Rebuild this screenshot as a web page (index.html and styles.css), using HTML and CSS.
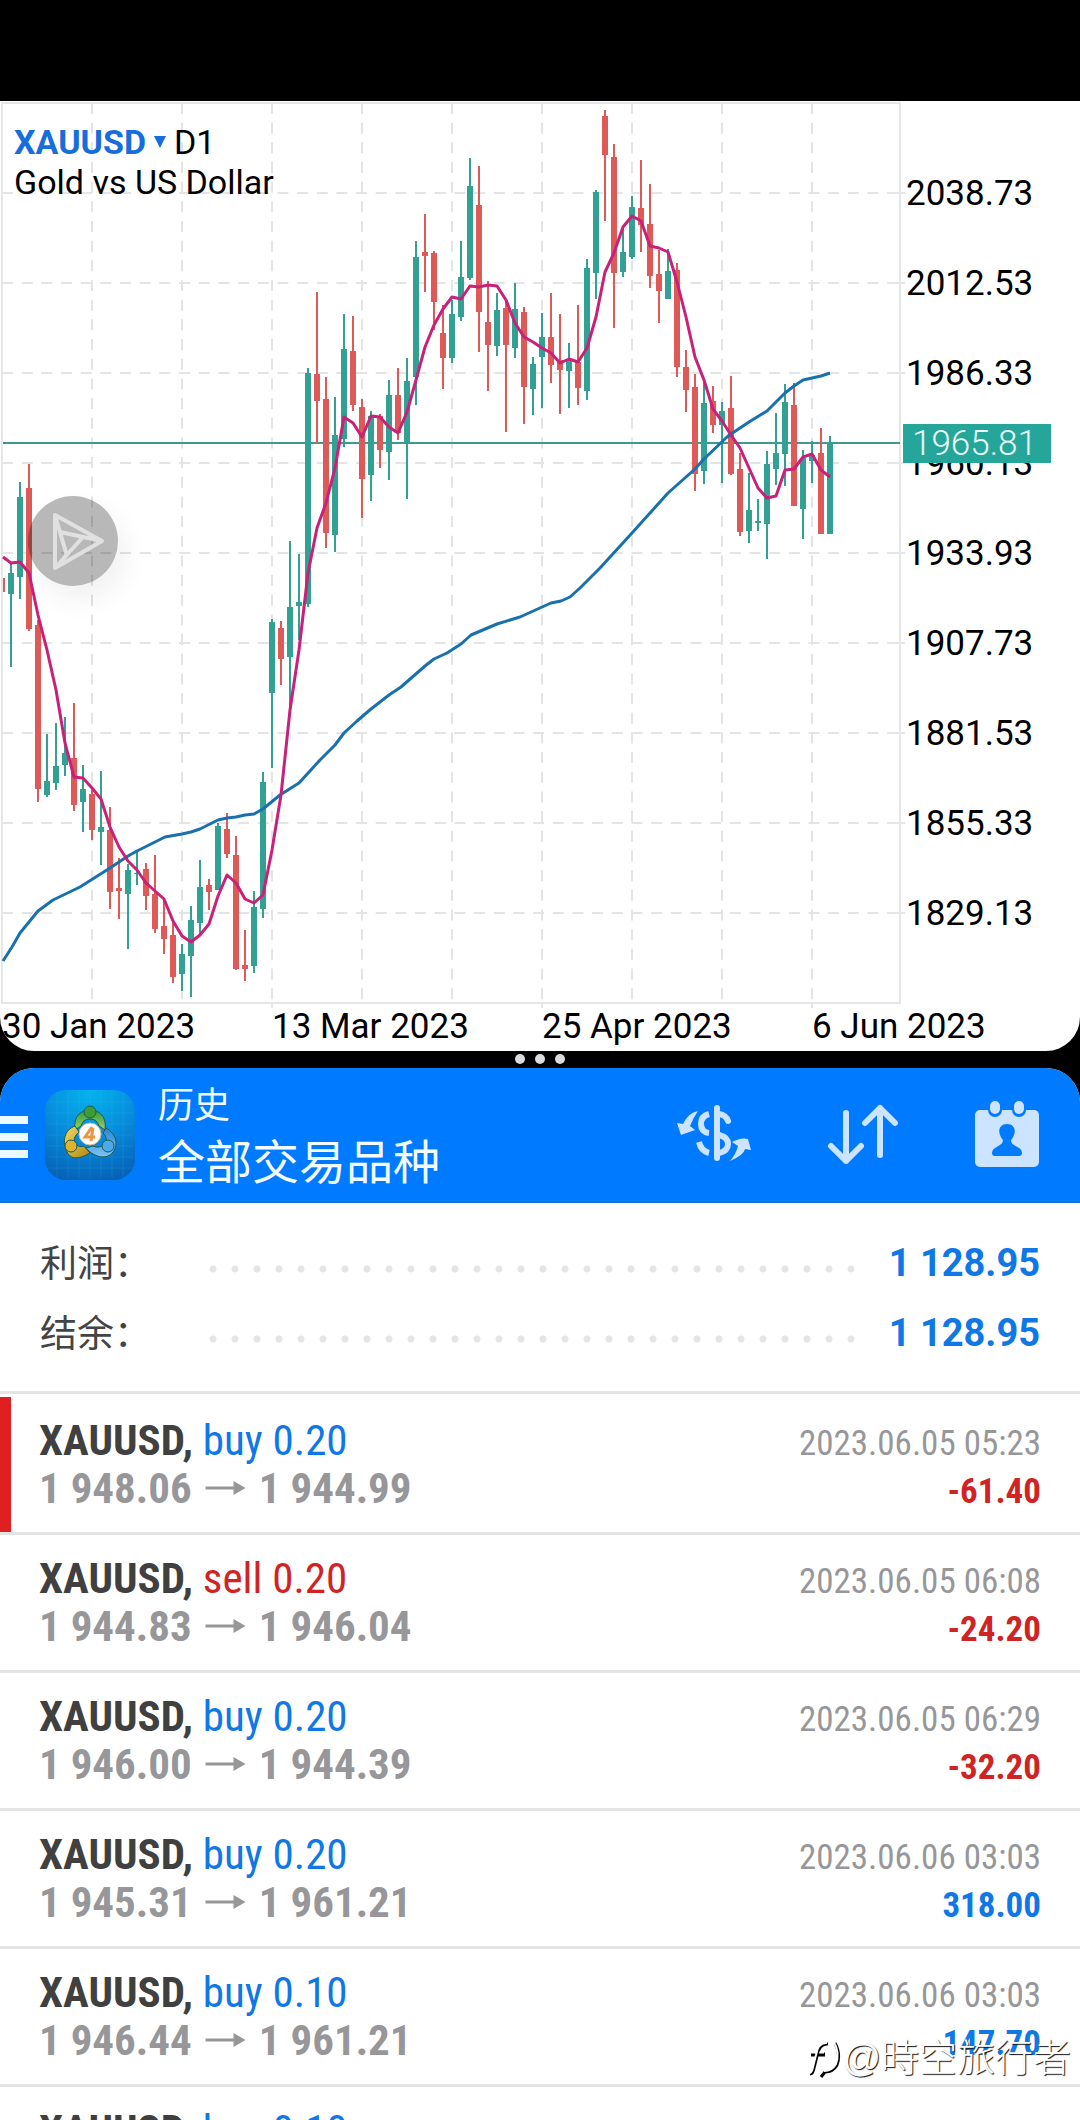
FILE: index.html
```html
<!DOCTYPE html>
<html lang="zh-CN">
<head>
<meta charset="utf-8">
<meta name="viewport" content="width=device-width, initial-scale=1">
<title>MetaTrader 4</title>
<link rel="stylesheet" href="styles.css">
</head>
<body>
<div class="screen">
  <div class="status-bar"></div>

  <section class="chart-pane" aria-label="XAUUSD D1">
    <svg class="chart" viewBox="0 101 1080 950" role="img" aria-label="Gold vs US Dollar">
      <g class="grid">
        <path d="M92 103V1003M182 103V1003M272 103V1003M362 103V1003M452 103V1003M542 103V1003M632 103V1003M722 103V1003M812 103V1003"/>
        <path d="M2 193H900M2 283H900M2 373H900M2 463H900M2 553H900M2 643H900M2 733H900M2 823H900M2 913H900"/>
      </g>
      <path class="frame" d="M2 103H900V1003H2ZM272 1003V1008M542 1003V1008M812 1003V1008M888 193H905M888 283H905M888 373H905M888 463H905M888 553H905M888 643H905M888 733H905M888 823H905M888 913H905"/>
      <path class="price-line" d="M3 443H900"/>
      <!-- rising days: wicks, then bodies -->
      <path class="wick up" d="M11 563V667M20 482V599M47 734V797M56 723V790M65 717V776M83 765V832M101 771V865M128 864V949M137 851V885M182 944V991M191 906V997M200 860V935M218 823V890M254 891V973M263 772V918M272 619V768M290 541V710M299 554V640M308 368V607M335 397V552M344 314V447M371 411V501M389 380V480M407 358V499M416 241V405M452 300V363M461 241V321M470 158V280M497 293V356M515 283V358M533 357V415M542 313V408M569 343V408M587 259V400M596 190V299M623 227V277M632 196V259M668 249V299M704 383V484M722 402V483M749 473V543M758 499V531M767 451V559M776 413V485M785 384V486M803 450V539M812 441V483M830 436V534"/>
      <path class="body up" d="M11 573V594M20 497V577M47 781V795M56 766V783M65 753V765M83 789V802M101 827V832M128 870V894M137 873V874M182 954V974M191 920V956M200 887V923M218 826V890M254 907V966M263 782V909M272 622V693M290 607V657M299 602V606M308 373V604M335 435V535M344 349V439M371 416V475M389 395V452M407 381V443M416 257V377M452 314V358M461 277V317M470 186V278M497 310V346M515 309V348M533 364V389M542 337V357M569 360V371M587 268V391M596 192V273M623 252V272M632 207V257M668 271V299M704 403V471M722 411V425M749 510V531M758 521V523M767 464V524M776 453V469M785 402V454M803 458V509M812 455V461M830 443V534"/>
      <!-- falling days: wicks, then bodies -->
      <path class="wick down" d="M4 578V592M29 464V631M38 620V802M74 703V811M92 790V840M110 807V909M119 858V919M146 863V910M155 855V933M164 898V954M173 923V983M209 879V910M227 813V858M236 836V970M245 930V981M281 621V685M317 292V443M326 377V548M353 316V411M362 399V518M380 414V468M398 368V440M425 214V292M434 251V330M443 305V389M479 166V352M488 281V391M506 300V432M524 307V424M551 293V383M560 314V414M578 305V405M605 110V221M614 144V328M641 160V252M650 184V288M659 250V323M677 263V377M686 350V412M695 374V491M713 386V433M731 376V475M740 453V536M794 383V506M821 428V534"/>
      <path class="body down" d="M29 488V629M38 625V789M74 758V805M92 794V830M110 830V892M119 888V891M146 869V896M155 894V929M164 926V939M173 935V977M209 885V892M227 829V854M236 855V969M245 965V969M281 628V659M317 374V401M326 399V533M353 351V405M362 407V479M380 416V450M398 395V433M425 252V256M434 253V302M443 333V358M479 205V312M488 322V345M506 308V345M524 312V387M551 337V365M560 360V370M578 362V388M605 116V155M614 157V273M641 208V225M650 224V276M659 274V291M677 270V367M686 367V390M695 387V474M713 401V425M731 408V474M740 469V532M794 405V506M821 453V534"/>
      <polyline class="ma slow" points="3,961 12,947 20,933 29,922 38,911 53,900 80,887 110,868 128,856 137,851 155,842 165,837 182,834 191,832 200,829 218,820 227,818 236,817 245,815 254,814 263,809 280,795 299,783 320,760 335,745 344,733 357,721 371,709 389,695 401,687 425,666 434,659 447,653 461,644 471,635 497,624 520,617 551,603 561,601 570,597 580,588 600,568 632,533 668,493 686,477 695,469 704,459 727,437 731,434 749,422 767,411 785,393 794,386 803,380 821,376 830,373"/>
      <polyline class="ma fast" points="3,557 11,563 20,562 29,573 38,615 47,650 56,690 65,743 74,777 83,778 92,788 101,799 110,827 119,847 128,861 137,870 146,883 155,891 164,899 173,921 182,936 191,942 200,935 209,924 218,896 227,875 236,883 245,899 254,903 263,895 272,850 281,795 290,710 299,650 308,573 317,528 326,503 335,468 344,417 353,423 362,437 371,416 380,417 389,427 398,433 407,412 416,380 425,347 434,325 443,309 452,297 461,299 470,286 479,287 488,285 497,286 506,300 515,323 524,337 533,342 542,348 551,353 560,363 569,359 578,362 587,348 596,317 605,272 614,253 623,227 632,216 641,221 650,246 659,248 668,252 677,282 686,317 695,357 704,380 713,409 722,421 731,435 740,448 749,468 758,488 767,498 776,496 785,470 794,469 803,457 812,454 821,470 830,477"/>
      <g class="axis">
        <text x="906" y="205">2038.73</text>
        <text x="906" y="295">2012.53</text>
        <text x="906" y="385">1986.33</text>
        <text x="906" y="475">1960.13</text>
        <text x="906" y="565">1933.93</text>
        <text x="906" y="655">1907.73</text>
        <text x="906" y="745">1881.53</text>
        <text x="906" y="835">1855.33</text>
        <text x="906" y="925">1829.13</text>
        <text x="2" y="1038">30 Jan 2023</text>
        <text x="272" y="1038">13 Mar 2023</text>
        <text x="542" y="1038">25 Apr 2023</text>
        <text x="812" y="1038">6 Jun 2023</text>
      </g>
      <rect class="price-tag" x="903" y="424" width="148" height="39"/>
      <text class="price-now" x="912" y="455">1965.81</text>
    </svg>
    <div class="chart-title">
      <button class="symbol-picker" type="button"><b>XAUUSD</b><svg width="12" height="12" viewBox="0 0 12 12" aria-hidden="true"><path d="M0 0H12L6 12Z"/></svg><span>D1</span></button>
      <p>Gold vs US Dollar</p>
    </div>
    <button class="float-ball" type="button" aria-label="play">
      <svg width="90" height="90" viewBox="28 496 90 90"><path d="M55 515L102 541L55 568ZM55 515L67 556M60 532L102 541M83 537L55 568"/></svg>
    </button>
  </section>

  <div class="splitter"><i></i><i></i><i></i></div>

  <main class="history-pane">
    <header class="app-bar">
      <button class="menu" type="button" aria-label="菜单"><i></i><i></i><i></i></button>
      <svg class="logo" viewBox="0 0 90 90" aria-hidden="true">
        <defs>
          <radialGradient id="sky" cx="50%" cy="0%" r="105%"><stop offset="0" stop-color="#04b4ee"/><stop offset=".5" stop-color="#078cdc"/><stop offset="1" stop-color="#0660b4"/></radialGradient>
          <linearGradient id="green" x2="0" y2="1"><stop offset="0" stop-color="#2f9a3a"/><stop offset="1" stop-color="#9ad06a"/></linearGradient>
          <linearGradient id="gold" x2="1" y2="1"><stop offset="0" stop-color="#f0d860"/><stop offset="1" stop-color="#b08a10"/></linearGradient>
          <linearGradient id="blue" x2="0" y2="1"><stop offset="0" stop-color="#2a86d0"/><stop offset="1" stop-color="#7cc4f4"/></linearGradient>
        </defs>
        <rect width="90" height="90" rx="21" fill="url(#sky)"/>
        <path d="M12 2V88M23 2V88M34 2V88M45 2V88M56 2V88M67 2V88M78 2V88M2 12H88M2 23H88M2 34H88M2 45H88M2 56H88M2 67H88M2 78H88" stroke="#5cc8f4" stroke-opacity=".14"/>
        <g stroke="#1c5a5a" stroke-width="1">
          <path d="M30 40C28 26 36 20 45 20S62 26 60 40L54 36Q52 29 45 29T36 36Z" fill="url(#green)"/>
          <path d="M30 36C19 40 17 52 22 62S38 67 45 63L39 56Q33 58 30 53T34 42Z" fill="url(#gold)"/>
          <path d="M61 38C71 44 74 54 68 62S50 68 41 58L48 56Q54 59 59 54T58 43Z" fill="url(#blue)"/>
          <circle cx="45" cy="22" r="6" fill="#3d9c36"/>
          <circle cx="26" cy="56" r="6" fill="#dcb430"/>
          <circle cx="63" cy="56" r="6" fill="#4fa8e8"/>
        </g>
        <circle cx="45" cy="44" r="11" fill="#fff" stroke="#c8b890"/>
        <path d="M47 37L40 47H50M48 38L46 51" fill="none" stroke="#ee9440" stroke-width="3"/>
      </svg>
      <div class="titles">
        <h1>历史</h1>
        <p>全部交易品种</p>
      </div>
      <nav class="actions">
        <button type="button" aria-label="交易品种">
          <svg width="76" height="68" viewBox="677 1099 76 68">
            <g fill="none" stroke="#cce4ff" stroke-width="6">
              <path d="M718 1108V1158" stroke-linecap="round"/>
              <path d="M710 1114Q702 1116 702 1124T710 1133M700 1142Q702 1151 710 1153"/>
              <path d="M720 1114Q727 1115 729 1121" stroke-linecap="round"/>
              <path d="M720 1135Q729 1137 729 1144T720 1153"/>
            </g>
            <path fill="#cce4ff" d="M699 1111Q689 1113 684 1124L678 1123L682 1135L696 1130L691 1126Q694 1118 699 1111ZM731 1161Q745 1155 746 1149L752 1150L749 1139Q742 1137 733 1142L739 1146Q737 1154 731 1161Z"/>
          </svg>
        </button>
        <button type="button" aria-label="排序">
          <svg width="72" height="68" viewBox="825 1099 72 68"><path d="M844 1113V1161M829 1146L844 1161L859 1146M878 1155V1108M863 1123L878 1108L893 1123" fill="none" stroke="#cce4ff" stroke-width="6" stroke-linecap="round" stroke-linejoin="round"/></svg>
        </button>
        <button type="button" aria-label="日期">
          <svg width="66" height="68" viewBox="974 1099 66 68">
            <rect x="975" y="1110" width="64" height="57" rx="5" fill="#cce4ff"/>
            <path d="M988 1106V1110A7 7 0 0 0 1002 1110V1106M1012 1106V1110A7 7 0 0 0 1026 1110V1106" fill="#007aff"/>
            <rect x="990" y="1101" width="10" height="13" rx="5" fill="#cce4ff"/>
            <rect x="1014" y="1101" width="10" height="13" rx="5" fill="#cce4ff"/>
            <path d="M1007 1124C1000 1124 998 1130 1000 1135Q1001 1138 1003 1140C1003 1147 992 1146 992 1153Q992 1156 995 1156H1019Q1022 1156 1022 1153C1022 1146 1011 1147 1011 1140Q1013 1138 1014 1135C1016 1130 1014 1124 1007 1124Z" fill="#007aff"/>
          </svg>
        </button>
      </nav>
    </header>

    <dl class="summary">
      <div><dt>利润：</dt><dd class="dots"></dd><dd>1 128.95</dd></div>
      <div><dt>结余：</dt><dd class="dots"></dd><dd>1 128.95</dd></div>
    </dl>

    <ul class="deals">
      <li class="deal marked">
        <div class="line"><span class="name"><b>XAUUSD,</b> <span class="buy">buy 0.20</span></span><time>2023.06.05 05:23</time></div>
        <div class="line"><span class="prices">1 948.06<svg class="arrow" viewBox="0 0 40 16"><path d="M0 8H34"/><path class="tip" d="M28 1L40 8L28 15Z"/></svg>1 944.99</span><b class="loss">-61.40</b></div>
      </li>
      <li class="deal">
        <div class="line"><span class="name"><b>XAUUSD,</b> <span class="sell">sell 0.20</span></span><time>2023.06.05 06:08</time></div>
        <div class="line"><span class="prices">1 944.83<svg class="arrow" viewBox="0 0 40 16"><path d="M0 8H34"/><path class="tip" d="M28 1L40 8L28 15Z"/></svg>1 946.04</span><b class="loss">-24.20</b></div>
      </li>
      <li class="deal">
        <div class="line"><span class="name"><b>XAUUSD,</b> <span class="buy">buy 0.20</span></span><time>2023.06.05 06:29</time></div>
        <div class="line"><span class="prices">1 946.00<svg class="arrow" viewBox="0 0 40 16"><path d="M0 8H34"/><path class="tip" d="M28 1L40 8L28 15Z"/></svg>1 944.39</span><b class="loss">-32.20</b></div>
      </li>
      <li class="deal">
        <div class="line"><span class="name"><b>XAUUSD,</b> <span class="buy">buy 0.20</span></span><time>2023.06.06 03:03</time></div>
        <div class="line"><span class="prices">1 945.31<svg class="arrow" viewBox="0 0 40 16"><path d="M0 8H34"/><path class="tip" d="M28 1L40 8L28 15Z"/></svg>1 961.21</span><b class="gain">318.00</b></div>
      </li>
      <li class="deal">
        <div class="line"><span class="name"><b>XAUUSD,</b> <span class="buy">buy 0.10</span></span><time>2023.06.06 03:03</time></div>
        <div class="line"><span class="prices">1 946.44<svg class="arrow" viewBox="0 0 40 16"><path d="M0 8H34"/><path class="tip" d="M28 1L40 8L28 15Z"/></svg>1 961.21</span><b class="gain">147.70</b></div>
      </li>
      <li class="deal">
        <div class="line"><span class="name"><b>XAUUSD,</b> <span class="buy">buy 0.10</span></span><time>2023.06.06 13:03</time></div>
      </li>
    </ul>
  </main>

  <div class="watermark">
    <svg width="36" height="40" viewBox="0 0 36 40" aria-hidden="true">
      <path class="shade" d="M4 36Q7 36 8 30L11 18M5 17H19M11 18Q13 5 22 6M18 16H19M29 5Q35 16 31 27Q27 34 19 34L15 39"/>
      <path class="light" d="M3 35Q6 35 7 29L10 17M10 17Q12 4 21 5M28 4Q34 15 30 26Q26 33 18 33"/>
    </svg>
    <span>@時空旅行者</span>
  </div>
</div>
</body>
</html>
```

FILE: styles.css
```css
* { box-sizing: border-box; }

body {
  margin: 0;
  background: #000;
  font-family: Roboto, "Noto Sans CJK SC", sans-serif;
}

h1, p, dl, dd, ul { margin: 0; padding: 0; font-weight: 400; }

button {
  padding: 0;
  border: 0;
  background: none;
  color: inherit;
  font: inherit;
}

svg { display: block; }

.screen {
  position: relative;
  display: flex;
  flex-direction: column;
  height: 100vh;
  overflow: hidden;
}

.status-bar { flex: none; height: 101px; }

/* chart */
.chart-pane {
  position: relative;
  flex: none;
  overflow: hidden;
  background: #fff;
  border-radius: 0 0 34px 34px;
}

.chart { width: 100%; height: auto; }
.chart path, .chart polyline { fill: none; }
.grid path { stroke: #e4e4e4; stroke-width: 2; stroke-dasharray: 11 8.67; }
.frame { stroke: #e6e6e6; stroke-width: 2; }
.price-line { stroke: #3c9a92; stroke-width: 2; }
.wick { stroke-width: 2; }
.body { stroke-width: 6; }
.up { stroke: #33a094; }
.down { stroke: #dd5a58; }
.ma { stroke-width: 3; stroke-linejoin: round; }
.slow { stroke: #1870ae; }
.fast { stroke: #c9207a; }
.axis text, .price-now { font-size: 35px; fill: #000; }
.price-tag { fill: #26a69a; }
.chart .price-now { fill: #eafffb; font-weight: 300; }

.chart-title {
  position: absolute;
  top: 21px;
  left: 14px;
  font-size: 34px;
  line-height: 40px;
}

.symbol-picker { display: flex; align-items: center; gap: 8px; }
.symbol-picker b { color: #186ddd; }
.symbol-picker path { fill: #186ddd; }

.float-ball {
  position: absolute;
  top: 395px;
  left: 28px;
  width: 90px;
  height: 90px;
  border-radius: 50%;
  background: rgba(0, 0, 0, .28);
  box-shadow: 8px 14px 28px rgba(0, 0, 0, .06);
}

.float-ball path { fill: none; stroke: #e0e0e0; stroke-width: 4; stroke-linejoin: round; }

/* divider between the two windows */
.splitter {
  flex: none;
  display: flex;
  justify-content: center;
  gap: 10px;
  height: 17px;
  padding-top: 3px;
}

.splitter i { width: 10px; height: 10px; border-radius: 50%; background: #dcdcdc; }

/* history */
.history-pane {
  flex: 1;
  min-height: 0;
  overflow: hidden;
  background: #fff;
  border-radius: 34px 34px 0 0;
}

.app-bar {
  display: flex;
  align-items: center;
  height: 135px;
  padding-right: 40px;
  background: #007aff;
  border-bottom: 2px solid #1670cf;
  color: #f2fbff;
}

.menu { display: grid; gap: 9px; width: 28px; margin-top: 4px; }
.menu i { height: 8px; background: #eafaff; }
.logo { width: 90px; height: 90px; margin-left: 17px; }
.titles { padding-top: 9px; margin-left: 23px; }
.titles h1 { font-size: 36px; line-height: 48px; }
.titles p { font-size: 47px; line-height: 66px; }
.actions { display: flex; gap: 75px; margin-left: auto; padding-bottom: 3px; }

.summary {
  padding: 25px 40px 23px;
  margin-bottom: 3px;
  border-bottom: 3px solid #e4e4e4;
}

.summary div { display: flex; align-items: center; height: 70px; }
.summary dt { width: 166px; padding-bottom: 5px; font-size: 37px; color: #444; }
.summary dd { color: #0f77e6; font-size: 38px; font-weight: 700; }

.summary .dots {
  flex: 1;
  height: 8px;
  margin: 12px 31px 0 0;
  background: radial-gradient(circle at 7px 4px, #e4e4e4 3px, transparent 4px) 0 0 / 22px 8px repeat-x;
}

.deals {
  list-style: none;
  font-family: "Roboto Condensed", "Liberation Sans Narrow", sans-serif;
}

.deal {
  height: 138px;
  padding: 21px 39px 0;
  border-bottom: 3px solid #e4e4e4;
}

.marked { box-shadow: inset 11px 0 #e02020; }

.line {
  display: flex;
  justify-content: space-between;
  align-items: baseline;
  font-size: 43px;
  line-height: 44px;
}

.line time, .line > b { font-size: 35px; }
.name b { color: #404040; }
.line time { color: #97979a; }
.prices { display: flex; align-items: center; gap: 13px; color: #97979a; font-weight: 700; }
.arrow { width: 41px; height: 16px; }
.arrow path { stroke: #97979a; stroke-width: 3; }
.arrow .tip { fill: #97979a; stroke: none; }
.buy, .gain { color: #0f77e6; }
.sell, .loss { color: #d02424; }

.watermark {
  position: absolute;
  right: 9px;
  bottom: 37px;
  display: flex;
  align-items: center;
  color: #fff;
  font: 300 38px/50px "Liberation Sans", "Noto Sans CJK TC", sans-serif;
  text-shadow: 1px 1px 1px #111;
}

.watermark path { fill: none; stroke-width: 2; }
.watermark .shade { stroke: #000; stroke-width: 3; }
.watermark .light { stroke: #fff; }
```
